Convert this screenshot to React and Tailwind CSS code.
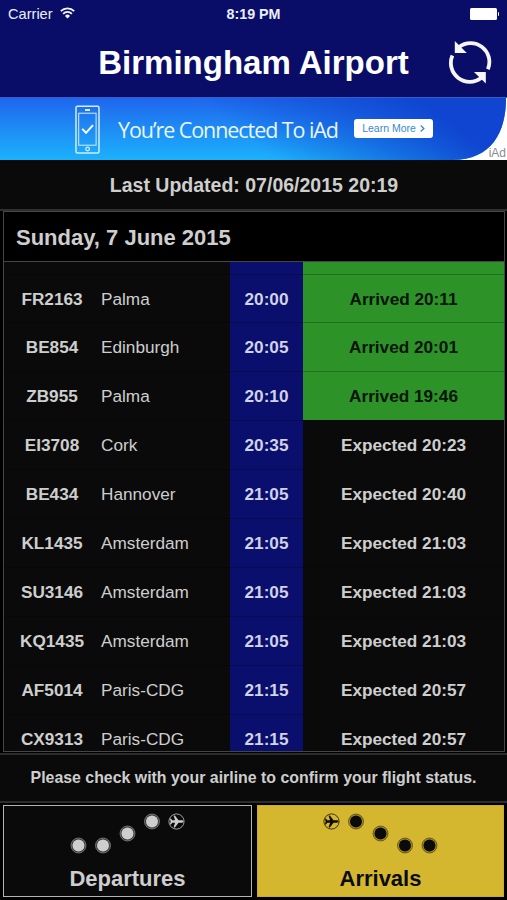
const flights = [
  { code: 'FR2163', city: 'Palma', time: '20:00', status: 'Arrived 20:11', arrived: true },
  { code: 'BE854', city: 'Edinburgh', time: '20:05', status: 'Arrived 20:01', arrived: true },
  { code: 'ZB955', city: 'Palma', time: '20:10', status: 'Arrived 19:46', arrived: true },
  { code: 'EI3708', city: 'Cork', time: '20:35', status: 'Expected 20:23' },
  { code: 'BE434', city: 'Hannover', time: '21:05', status: 'Expected 20:40' },
  { code: 'KL1435', city: 'Amsterdam', time: '21:05', status: 'Expected 21:03' },
  { code: 'SU3146', city: 'Amsterdam', time: '21:05', status: 'Expected 21:03' },
  { code: 'KQ1435', city: 'Amsterdam', time: '21:05', status: 'Expected 21:03' },
  { code: 'AF5014', city: 'Paris-CDG', time: '21:15', status: 'Expected 20:57' },
  { code: 'CX9313', city: 'Paris-CDG', time: '21:15', status: 'Expected 20:57' },
];

function WifiIcon() {
  return (
    <svg className="mb-px ml-[7px] h-[12px] w-[15px]" viewBox="0 0 15 12" fill="none" stroke="#f3f4fc" strokeWidth="1.8">
      <path d="M0.8 4.2a9.4 9.4 0 0 1 13.4 0" />
      <path d="M3.1 6.8a6.2 6.2 0 0 1 8.8 0" />
      <path d="M7.5 11.5L5 8.9a3.5 3.5 0 0 1 5 0z" fill="#f3f4fc" stroke="none" />
    </svg>
  );
}

function RefreshIcon() {
  return (
    <svg className="h-[44px] w-[44px]" viewBox="0 0 44 44" fill="none">
      <path d="M11 6.1A18.8 18.8 0 0 1 39.9 28.2" stroke="#f6f6fa" strokeWidth="3.8" />
      <path d="M33.4 36.7A18.8 18.8 0 0 1 4.4 14.6" stroke="#f6f6fa" strokeWidth="3.8" />
      <path d="M6.8 0V11.9H18.8z" fill="#f6f6fa" />
      <path d="M37.8 42.5V31H26z" fill="#f6f6fa" />
    </svg>
  );
}

function StatusBar() {
  return (
    <div className="grid h-7 grid-cols-3 items-center px-2 text-[14.6px] text-[#eceefa]">
      <div className="flex items-center">
        <span className="pt-px">Carrier</span>
        <WifiIcon />
      </div>
      <span className="pt-px text-center text-[14.3px] font-bold">8:19 PM</span>
      <div className="flex items-center justify-end">
        <span className="h-[12px] w-[27px] rounded-[1.5px] bg-white" />
        <span className="ml-px h-[4px] w-[1.5px] rounded-r bg-white" />
      </div>
    </div>
  );
}

function AdBanner() {
  return (
    <div className="relative h-[63px] overflow-hidden border-t border-[#3a5fc4] bg-white">
      <svg className="absolute inset-0 h-[62px] w-[507px]" viewBox="0 0 507 62">
        <defs>
          <linearGradient id="sky" x1="0" y1="0" x2="0" y2="1">
            <stop offset="0" stopColor="#2066ed" />
            <stop offset="1" stopColor="#1bb2fc" />
          </linearGradient>
          <linearGradient id="deep" gradientUnits="userSpaceOnUse" x1="310" y1="90" x2="395" y2="-20">
            <stop offset="0" stopColor="#0f45d0" stopOpacity="0" />
            <stop offset="1" stopColor="#0f45d0" />
          </linearGradient>
        </defs>
        <path d="M0 0H506C506 34 492 62 452 62H0z" fill="url(#sky)" />
        <path d="M0 0H506C506 34 492 62 452 62H0z" fill="url(#deep)" />
        <g fill="none" stroke="#d5ecff">
          <rect x="76" y="8.2" width="23" height="46.8" rx="1.5" strokeWidth="1.5" />
          <rect x="78.7" y="15.2" width="17.4" height="32" strokeWidth="1" />
          <path d="M85 12h5" strokeWidth="2" />
          <circle cx="87.6" cy="51" r="1.8" strokeWidth="1.3" />
          <path d="M82.2 30.9l3.8 3.9 7-7.7" stroke="#ffffff" strokeWidth="2" />
        </g>
      </svg>
      <div className="relative flex h-full items-center pl-[118px]">
        <span className="w-[236px] whitespace-nowrap pt-[2px] font-['Open_Sans','Noto_Sans',sans-serif] text-[21.5px] tracking-[-1.07px] text-[#eaf6ff]">
          You’re Connected To iAd
        </span>
        <span className="mb-px flex h-[19px] w-[79px] items-center justify-center gap-1 rounded-[3px] bg-white text-[10.5px] text-[#388bd0]">
          Learn More
          <svg className="h-[7px] w-[5px]" viewBox="0 0 5 7" fill="none" stroke="#388bd0" strokeWidth="1.3">
            <path d="M0.7 0.5l3.2 3-3.2 3" />
          </svg>
        </span>
      </div>
      <span className="absolute right-[1px] bottom-0 text-[12px] leading-[14px] text-[#8c8c8c]">iAd</span>
    </div>
  );
}

function FlightRow({ flight }) {
  return (
    <div className="flex h-[48.9px] shrink-0 text-[17.2px] leading-none">
      <div className="flex w-[96px] items-center justify-center border-t border-[#070707] pt-[1.5px] font-bold">{flight.code}</div>
      <div className="flex w-[130px] items-center border-t border-[#070707] pt-[1.5px] pl-[1px]">{flight.city}</div>
      <div className="flex w-[73px] items-center justify-center border-t border-[#090b4e] bg-[#0a0e6c] pt-[1.5px] font-bold text-[#d0d2e6]">
        {flight.time}
      </div>
      <div
        className={
          flight.arrived
            ? 'flex flex-1 items-center justify-center border-t border-[#207020] bg-[#2d9328] pt-[1.5px] font-bold text-[#071407]'
            : 'flex flex-1 items-center justify-center border-t border-[#080808] pt-[1.5px] font-bold'
        }
      >
        {flight.status}
      </div>
    </div>
  );
}

function PlaneBadge({ x, y, color }) {
  return (
    <g transform={`translate(${x} ${y})`}>
      <circle r="7.6" fill="none" stroke={color} strokeWidth="1" strokeOpacity="0.75" />
      <path
        d="M7 0C7 -0.8 6 -1.2 5 -1.2H2L-1.6 -6H-3L-1.4 -1.2H-4.2L-5.6 -3H-6.6L-5.9 0L-6.6 3H-5.6L-4.2 1.2H-1.4L-3 6H-1.6L2 1.2H5C6 1.2 7 0.8 7 0z"
        fill={color}
      />
    </g>
  );
}

function RouteDots({ plane, dots, color }) {
  return (
    <svg className="h-[50px] w-[120px]" viewBox="0 0 120 50">
      {dots.map(([x, y]) => (
        <g key={x}>
          <circle cx={x} cy={y} r="7.5" fill={color} fillOpacity="0.25" stroke={color} strokeOpacity="0.45" />
          <circle cx={x} cy={y} r="6" fill={color} />
        </g>
      ))}
      <PlaneBadge x={plane[0]} y={plane[1]} color={color} />
    </svg>
  );
}

export default function App() {
  return (
    <div className="flex h-[900px] w-[507px] flex-col overflow-hidden bg-[#0a0a0a] font-['Liberation_Sans',Arial,sans-serif] text-[#cecece]">
      <header className="h-[97px] shrink-0 bg-[#090d68]">
        <StatusBar />
        <div className="grid h-[69px] grid-cols-[1fr_auto_1fr] items-center">
          <h1 className="col-start-2 whitespace-nowrap text-[33px] font-bold leading-none text-white">Birmingham Airport</h1>
          <div className="flex justify-end pr-[15px]">
            <RefreshIcon />
          </div>
        </div>
      </header>

      <AdBanner />

      <div className="flex h-[49px] shrink-0 items-center justify-center pt-[2px] pl-px text-[19.5px] font-bold">
        Last Updated: 07/06/2015 20:19
      </div>

      {/* Flight board */}
      <main className="flex h-[544px] shrink-0 flex-col border-t-2 border-[#303030] bg-black pr-[2px] pl-[3px]">
        <div className="flex h-[541px] flex-col overflow-hidden border border-[#454545] bg-[#0a0a0a]">
          <h2 className="flex h-[50px] shrink-0 items-center border-b border-[#454545] bg-black pt-px pl-[12px] text-[22px] font-bold">
            Sunday, 7 June 2015
          </h2>
          {/* Bottom edge of the flight scrolled under the date */}
          <div className="flex h-[11.5px] shrink-0 pl-[226px]">
            <div className="w-[73px] bg-[#0a0e6c]" />
            <div className="flex-1 bg-[#2d9328]" />
          </div>
          {flights.map((flight) => (
            <FlightRow key={flight.code} flight={flight} />
          ))}
        </div>
      </main>

      <div className="flex h-[50px] shrink-0 items-center justify-center border-y-2 border-[#2c2c2c] text-[15.9px] font-bold">
        Please check with your airline to confirm your flight status.
      </div>

      <nav className="flex flex-1 gap-[5px] bg-black px-[3px] pt-[2px] pb-[3px] text-[22px] font-bold leading-none">
        <button className="flex w-[249px] flex-col items-center border border-[#b5b5b5] bg-[#0a0a0a]">
          <RouteDots plane={[108.5, 15.5]} dots={[[10.5, 39.5], [35, 39.5], [59.5, 27.5], [84, 15.5]]} color="#cecece" />
          <span className="mt-[12px]">Departures</span>
        </button>
        <button className="flex flex-1 flex-col items-center border border-[#c9ac2c] bg-[#d4b62f] text-[#0b0b0b]">
          <RouteDots plane={[10.5, 15.5]} dots={[[35, 15.5], [59.5, 27.5], [84, 39.5], [108.5, 39.5]]} color="#0b0b0b" />
          <span className="mt-[12px]">Arrivals</span>
        </button>
      </nav>
    </div>
  );
}
